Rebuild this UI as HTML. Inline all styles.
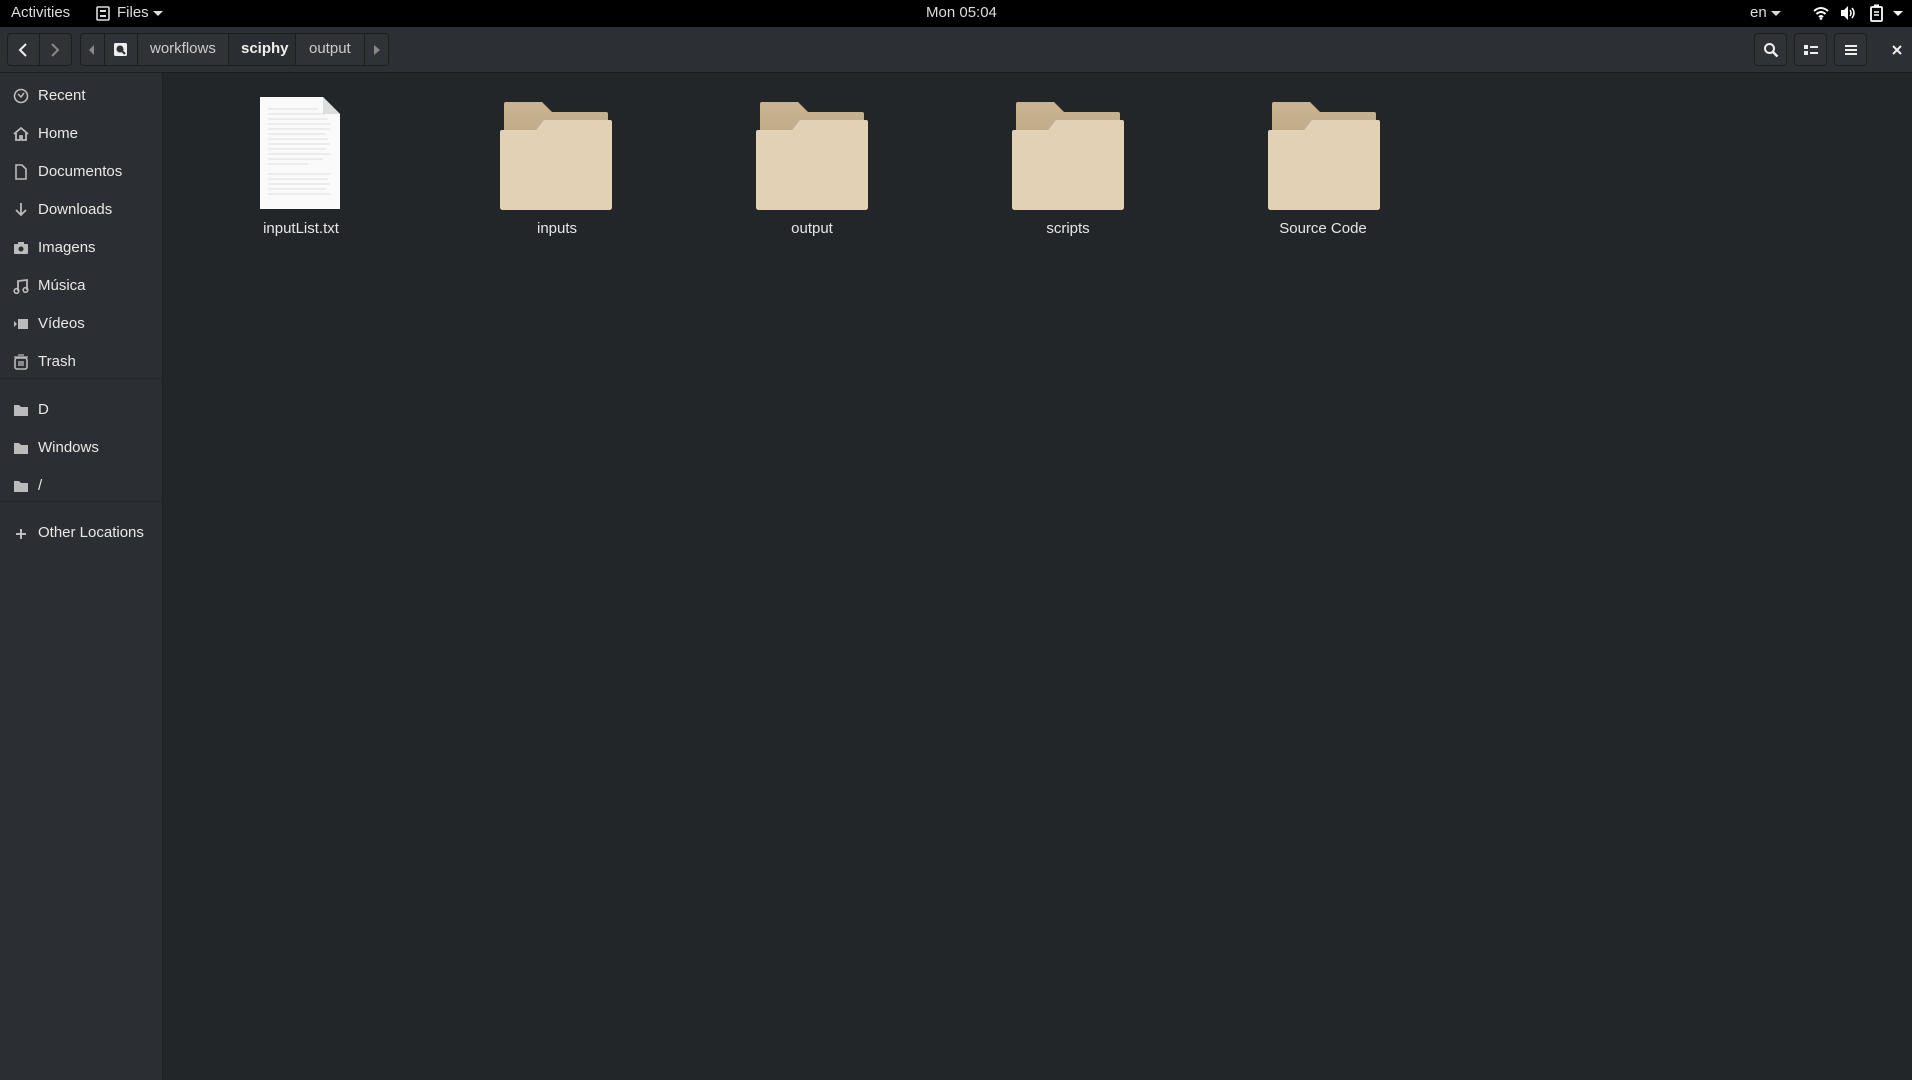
<!DOCTYPE html>
<html><head><meta charset="utf-8"><style>
*{margin:0;padding:0;box-sizing:border-box}
body{width:1912px;height:1080px;background:#232629;font-family:"Liberation Sans","DejaVu Sans",sans-serif;color:#eeeeec;overflow:hidden;position:relative;font-size:15px}
.top{position:absolute;left:0;top:0;width:1912px;height:27px;background:#000;color:#ddd;font-size:15px}
.top span{position:absolute;top:4px}
.hdr{position:absolute;left:0;top:27px;width:1912px;height:46px;background:#2c2f33;border-bottom:1px solid #1b1d1f}
.btn{position:absolute;top:6px;height:33px;background:#2f3237;border:1px solid #1c1e20;border-radius:4px}
.side{position:absolute;left:0;top:73px;width:163px;height:1007px;background:#2b2e33;border-right:1px solid #1e2022}
.item{position:absolute;left:38px;font-size:15px;color:#e8e8e6}
.ic{position:absolute;left:13px;width:16px;height:16px}
.sep{position:absolute;left:0;width:162px;height:1px;background:#24272a}
.lbl{position:absolute;top:220px;width:200px;text-align:center;font-size:15px;color:#e6e6e4}
</style></head><body>
<div class="top">
<span style="left:11px">Activities</span>
<svg style="position:absolute;left:96px;top:6px" width="14" height="15"><rect x="1" y="1" width="12" height="13" rx="1" fill="none" stroke="#ddd" stroke-width="1.6"/><rect x="4" y="4" width="6" height="2" fill="#ddd"/><rect x="4" y="9" width="6" height="2" fill="#ddd"/></svg>
<span style="left:117px">Files</span>
<svg style="position:absolute;left:153px;top:11px" width="10" height="6"><path d="M0 0h10L5 5z" fill="#ddd"/></svg>
<span style="left:926px">Mon 05:04</span>
<span style="left:1750px">en</span>
<svg style="position:absolute;left:1771px;top:11px" width="10" height="6"><path d="M0 0h10L5 5z" fill="#ddd"/></svg>
<svg style="position:absolute;left:1813px;top:6px" width="16" height="14"><path d="M1 5Q8-1 15 5M3.5 8Q8 4 12.5 8M6 11Q8 9 10 11" stroke="#fff" stroke-width="2" fill="none"/><circle cx="8" cy="12.5" r="1.3" fill="#fff"/></svg>
<svg style="position:absolute;left:1840px;top:5px" width="16" height="16"><path d="M1 5h3l4-4v14l-4-4H1z" fill="#fff"/><path d="M10 5q2 3 0 6M12 3q4 5 0 10" stroke="#fff" stroke-width="1.5" fill="none"/></svg>
<svg style="position:absolute;left:1870px;top:4px" width="14" height="18"><rect x="1" y="3" width="11" height="14" rx="1" fill="none" stroke="#fff" stroke-width="1.8"/><rect x="4" y="0.5" width="5" height="3" fill="#fff"/><path d="M4 8h5M4 11h5" stroke="#fff" stroke-width="1.5"/></svg>
<svg style="position:absolute;left:1893px;top:11px" width="10" height="6"><path d="M0 0h10L5 5z" fill="#fff"/></svg>
</div>
<div class="hdr">
<div class="btn" style="left:7px;width:65px"></div>
<div style="position:absolute;left:39px;top:7px;width:1px;height:31px;background:#1c1e20"></div>
<svg style="position:absolute;left:18px;top:16px" width="10" height="14"><path d="M8 1L2 7l6 6" stroke="#eee" stroke-width="2" fill="none"/></svg>
<svg style="position:absolute;left:50px;top:16px" width="10" height="14"><path d="M2 1l6 6-6 6" stroke="#888" stroke-width="2" fill="none"/></svg>
<div class="btn" style="left:80px;width:309px"></div>
<div style="position:absolute;left:104px;top:7px;width:1px;height:31px;background:#1c1e20"></div>
<div style="position:absolute;left:137px;top:7px;width:1px;height:31px;background:#1c1e20"></div>
<div style="position:absolute;left:228px;top:7px;width:68px;height:31px;background:#2a2d31;border-left:1px solid #1c1e20;border-right:1px solid #1c1e20"></div>
<div style="position:absolute;left:364px;top:7px;width:1px;height:31px;background:#1c1e20"></div>
<svg style="position:absolute;left:89px;top:18px" width="6" height="10"><path d="M5 0v10L0 5z" fill="#888"/></svg>
<svg style="position:absolute;left:113px;top:15px" width="15" height="15"><rect x="1" y="1" width="13" height="13" rx="1.5" fill="#eee"/><circle cx="7" cy="7" r="3.5" fill="#2f3237"/><path d="M8 8l4 4" stroke="#2f3237" stroke-width="2"/></svg>
<span style="position:absolute;left:150px;top:13px;color:#ccc">workflows</span>
<span style="position:absolute;left:241px;top:13px;font-weight:bold">sciphy</span>
<span style="position:absolute;left:309px;top:13px;color:#ccc">output</span>
<svg style="position:absolute;left:374px;top:18px" width="6" height="10"><path d="M0 0v10L6 5z" fill="#888"/></svg>
<div class="btn" style="left:1754px;width:33px"></div>
<div class="btn" style="left:1794px;width:33px"></div>
<div class="btn" style="left:1834px;width:33px"></div>
<svg style="position:absolute;left:1763px;top:15px" width="16" height="16"><circle cx="6.5" cy="6.5" r="4.5" stroke="#eee" stroke-width="2" fill="none"/><path d="M10 10l4.5 4.5" stroke="#eee" stroke-width="2.4"/></svg>
<svg style="position:absolute;left:1804px;top:17px" width="14" height="12"><rect x="0" y="1" width="4" height="4" fill="#eee"/><rect x="0" y="7" width="4" height="4" fill="#eee"/><rect x="6" y="2" width="8" height="2" fill="#eee"/><rect x="6" y="8" width="8" height="2" fill="#eee"/></svg>
<svg style="position:absolute;left:1845px;top:17px" width="12" height="12"><path d="M0 2h12M0 6h12M0 10h12" stroke="#eee" stroke-width="2"/></svg>
<svg style="position:absolute;left:1892px;top:18px" width="10" height="10"><path d="M1 1l8 8M9 1l-8 8" stroke="#eee" stroke-width="2"/></svg>
</div>
<div class="side">
<svg class="ic" style="top:15px"><circle cx="8" cy="8" r="6.5" stroke="#bbb" stroke-width="1.6" fill="none"/><path d="M5 6l3 3 3-4" stroke="#bbb" stroke-width="1.5" fill="none"/></svg><span class="item" style="top:14px">Recent</span>
<svg class="ic" style="top:53px"><path d="M1 8l7-6 7 6M3 7v7h4v-4h2v4h4V7" stroke="#bbb" stroke-width="1.8" fill="none"/></svg><span class="item" style="top:52px">Home</span>
<svg class="ic" style="top:91px"><path d="M3 1h6l4 4v10H3z" stroke="#bbb" stroke-width="1.6" fill="none"/></svg><span class="item" style="top:90px">Documentos</span>
<svg class="ic" style="top:129px"><path d="M8 1v11M3 8l5 5 5-5" stroke="#bbb" stroke-width="1.8" fill="none"/></svg><span class="item" style="top:128px">Downloads</span>
<svg class="ic" style="top:167px"><rect x="1" y="4" width="14" height="10" rx="1" fill="#bbb"/><rect x="5" y="2" width="6" height="3" fill="#bbb"/><circle cx="8" cy="9" r="2.5" fill="#2b2e33"/></svg><span class="item" style="top:166px">Imagens</span>
<svg class="ic" style="top:205px"><path d="M5 13V3l9-1v10" stroke="#bbb" stroke-width="1.8" fill="none"/><circle cx="3.5" cy="13" r="2.3" stroke="#bbb" stroke-width="1.6" fill="none"/><circle cx="12.5" cy="12" r="2.3" stroke="#bbb" stroke-width="1.6" fill="none"/></svg><span class="item" style="top:204px">Música</span>
<svg class="ic" style="top:243px"><path d="M1 5l3 3-3 3z" fill="#bbb"/><rect x="5" y="3" width="10" height="10" fill="#bbb"/></svg><span class="item" style="top:242px">Vídeos</span>
<svg class="ic" style="top:281px"><rect x="2" y="4" width="12" height="11" rx="2" stroke="#bbb" stroke-width="1.6" fill="none"/><path d="M1 3h14M5 1h6M6 7v5M8 7v5M10 7v5" stroke="#bbb" stroke-width="1.3"/></svg><span class="item" style="top:280px">Trash</span>
<div class="sep" style="top:305px"></div>
<svg class="ic" style="top:329px"><path d="M1 3h5l2 2h7v9H1z" fill="#bbb"/></svg><span class="item" style="top:328px">D</span>
<svg class="ic" style="top:367px"><path d="M1 3h5l2 2h7v9H1z" fill="#bbb"/></svg><span class="item" style="top:366px">Windows</span>
<svg class="ic" style="top:405px"><path d="M1 3h5l2 2h7v9H1z" fill="#bbb"/></svg><span class="item" style="top:404px">/</span>
<div class="sep" style="top:428px"></div>
<svg class="ic" style="top:453px"><path d="M8 3v10M3 8h10" stroke="#ccc" stroke-width="1.8"/></svg><span class="item" style="top:451px">Other Locations</span>
</div>
<svg style="position:absolute;left:260px;top:97px" width="80" height="112">
<path d="M0 0h63l17 17v95H0z" fill="#fafafa"/><path d="M63 0v17h17z" fill="#ddd"/>
<g stroke="#c4c4c4" stroke-width="0.6">
<path d="M8 12h50M8 17h56M8 22h60M8 27h62M8 32h62M8 37h58M8 42h60M8 47h62M8 52h58M8 57h62M8 62h55M8 67h40M8 77h62M8 82h60M8 87h62M8 92h58M8 97h62"/></g>
</svg>
<div class="lbl" style="left:201px">inputList.txt</div>
<svg width="0" height="0" style="position:absolute"><defs>
<linearGradient id="bk" x1="0" y1="0" x2="0" y2="1"><stop offset="0" stop-color="#c9b592"/><stop offset="1" stop-color="#b9a47f"/></linearGradient>
<symbol id="fd" viewBox="0 0 112 108"><path d="M6 0h36l10 10h54q2 0 2 2v40H4V2q0-2 2-2z" fill="url(#bk)"/><path d="M2 28h34l8-10h66q2 0 2 2v85q0 3-3 3H3q-3 0-3-3V30q0-2 2-2z" fill="#e3d1b6"/></symbol>
</defs></svg>
<svg style="position:absolute;left:500px;top:102px" width="112" height="108"><use href="#fd"/></svg>
<div class="lbl" style="left:457px">inputs</div>
<svg style="position:absolute;left:756px;top:102px" width="112" height="108"><use href="#fd"/></svg>
<div class="lbl" style="left:712px">output</div>
<svg style="position:absolute;left:1012px;top:102px" width="112" height="108"><use href="#fd"/></svg>
<div class="lbl" style="left:968px">scripts</div>
<svg style="position:absolute;left:1268px;top:102px" width="112" height="108"><use href="#fd"/></svg>
<div class="lbl" style="left:1223px">Source Code</div>
</body></html>
